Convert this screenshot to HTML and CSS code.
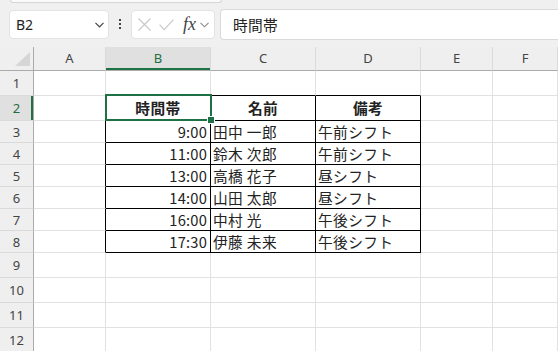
FILE: index.html
```html
<!DOCTYPE html>
<html lang="ja">
<head>
<meta charset="utf-8">
<link rel="stylesheet" href="styles.css">
</head>
<body>
<div class="ribbon-edge"></div>
<div class="formula-row">
  <div class="name-box">
    <span>B2</span>
    <svg width="9" height="6" viewBox="0 0 9 6"><path d="M0.5 0.8L4.5 4.8L8.5 0.8" fill="none" stroke="#444" stroke-width="1.2"/></svg>
  </div>
  <div class="dots"><i></i><i></i><i></i></div>
  <div class="fx-box">
    <svg class="ic-x" width="13" height="13" viewBox="0 0 13 13"><path d="M0.5 0.5L12.5 12.5M12.5 0.5L0.5 12.5" stroke="#c9c9c9" stroke-width="1.2" fill="none"/></svg>
    <svg class="ic-ok" width="15" height="12" viewBox="0 0 15 12"><path d="M0.6 5.6L5.2 10.6L14.4 0.6" stroke="#c9c9c9" stroke-width="1.2" fill="none"/></svg>
    <span class="fx">fx</span>
    <svg class="ic-dd" width="9" height="6" viewBox="0 0 9 6"><path d="M0.5 0.8L4.5 4.8L8.5 0.8" fill="none" stroke="#8a8a8a" stroke-width="1.1"/></svg>
  </div>
  <div class="formula-bar">時間帯</div>
</div>
<div class="sheet">
  <div class="ch corner"><svg width="33" height="23" viewBox="0 0 33 23"><polygon points="15,19 30,5 30,19" fill="#d6d6d6"/></svg></div>
  <div class="ch">A</div>
  <div class="ch ch-sel">B</div>
  <div class="ch">C</div>
  <div class="ch">D</div>
  <div class="ch">E</div>
  <div class="ch">F</div>

  <div class="rh">1</div><div class="c"></div><div class="c tb"></div><div class="c tb"></div><div class="c tb"></div><div class="c"></div><div class="c"></div>

  <div class="rh rh-sel">2</div><div class="c tr"></div>
  <div class="c tb tr hd active">時間帯<div class="sel"><div class="handle"></div></div></div>
  <div class="c tb tr hd">名前</div>
  <div class="c tb tr hd">備考</div>
  <div class="c"></div><div class="c"></div>

  <div class="rh">3</div><div class="c tr"></div><div class="c tb tr num">9:00</div><div class="c tb tr">田中 一郎</div><div class="c tb tr">午前シフト</div><div class="c"></div><div class="c"></div>
  <div class="rh">4</div><div class="c tr"></div><div class="c tb tr num">11:00</div><div class="c tb tr">鈴木 次郎</div><div class="c tb tr">午前シフト</div><div class="c"></div><div class="c"></div>
  <div class="rh">5</div><div class="c tr"></div><div class="c tb tr num">13:00</div><div class="c tb tr">高橋 花子</div><div class="c tb tr">昼シフト</div><div class="c"></div><div class="c"></div>
  <div class="rh">6</div><div class="c tr"></div><div class="c tb tr num">14:00</div><div class="c tb tr">山田 太郎</div><div class="c tb tr">昼シフト</div><div class="c"></div><div class="c"></div>
  <div class="rh">7</div><div class="c tr"></div><div class="c tb tr num">16:00</div><div class="c tb tr">中村 光</div><div class="c tb tr">午後シフト</div><div class="c"></div><div class="c"></div>
  <div class="rh">8</div><div class="c tr"></div><div class="c tb tr num">17:30</div><div class="c tb tr">伊藤 未来</div><div class="c tb tr">午後シフト</div><div class="c"></div><div class="c"></div>

  <div class="rh">9</div><div class="c"></div><div class="c"></div><div class="c"></div><div class="c"></div><div class="c"></div><div class="c"></div>
  <div class="rh">10</div><div class="c"></div><div class="c"></div><div class="c"></div><div class="c"></div><div class="c"></div><div class="c"></div>
  <div class="rh">11</div><div class="c"></div><div class="c"></div><div class="c"></div><div class="c"></div><div class="c"></div><div class="c"></div>
  <div class="rh">12</div><div class="c"></div><div class="c"></div><div class="c"></div><div class="c"></div><div class="c"></div><div class="c"></div>
</div>
</body>
</html>
```

FILE: styles.css
```css
* { box-sizing: border-box; }
html, body { margin: 0; padding: 0; }
body {
  width: 558px;
  height: 351px;
  overflow: hidden;
  background: #f0f0f0;
  font-family: "Noto Sans", "Open Sans", sans-serif;
}

.ribbon-edge {
  height: 3px;
  margin: 0 336px 0 10px;
  background: #fafafa;
  border: 1px solid #d6d6d6;
  border-top: none;
  border-radius: 0 0 5px 5px;
}

.formula-row {
  display: flex;
  align-items: flex-start;
  height: 44px;
  padding: 6px 0 0 9px;
}

.name-box {
  margin-top: 1px;
  width: 100px;
  height: 29px;
  background: #fff;
  border: 1px solid #e3e3e3;
  border-radius: 4px;
  display: flex;
  align-items: center;
  justify-content: space-between;
  padding: 0 4px 0 6px;
  font-size: 14px;
  color: #222;
}

.dots {
  width: 22px;
  height: 30px;
  display: flex;
  flex-direction: column;
  align-items: center;
  justify-content: center;
  gap: 2px;
}
.dots i {
  display: block;
  width: 2px;
  height: 2px;
  background: #444;
}

.fx-box {
  margin-top: 1px;
  width: 84px;
  height: 29px;
  background: #fff;
  border: 1px solid #e3e3e3;
  border-radius: 4px;
  display: flex;
  align-items: center;
  padding-left: 6px;
}
.ic-x { margin-right: 8px; }
.ic-ok { margin-right: 9px; }
.fx {
  font-family: "Liberation Serif", "DejaVu Serif", serif;
  font-style: italic;
  font-size: 18px;
  color: #444;
  line-height: 1;
  margin-top: -2px;
  margin-right: 4px;
}

.formula-bar {
  margin-left: 5px;
  flex: 1;
  height: 31px;
  background: #fff;
  border: 1px solid #dadada;
  border-right: none;
  border-radius: 4px 0 0 4px;
  padding-left: 12px;
  display: flex;
  align-items: center;
  font-family: "Noto Sans CJK JP", sans-serif;
  font-size: 14.7px;
  letter-spacing: 0.3px;
  color: #222;
}

.sheet {
  display: grid;
  grid-template-columns: 34px 72px 105px 105px 105px 72px 1fr;
  grid-template-rows: 24px 25px 25px repeat(6, 22px) repeat(4, 25px);
  background: #fff;
}

.ch {
  background: #efefef;
  border-right: 1px solid #dadada;
  border-bottom: 1px solid #ababab;
  display: flex;
  align-items: center;
  justify-content: center;
  font-size: 13px;
  color: #444;
  padding-bottom: 2px;
}
.ch.corner {
  border-right: 1px solid #ababab;
  padding: 0;
  align-items: flex-end;
  justify-content: flex-start;
}
.ch.corner svg { display: block; }
.ch-sel {
  background: #e0e0e0;
  color: #1e6e42;
  box-shadow: inset 0 -2px 0 #1e7145;
}

.rh {
  background: #efefef;
  border-right: 1px solid #ababab;
  border-bottom: 1px solid #dadada;
  display: flex;
  align-items: center;
  justify-content: center;
  font-size: 13px;
  color: #444;
}
.rh-sel {
  background: #e0e0e0;
  color: #1e6e42;
  box-shadow: inset -2px 0 0 #1e7145;
}

.c {
  position: relative;
  border-right: 1px solid #e1e1e1;
  border-bottom: 1px solid #e1e1e1;
  font-family: "Noto Sans CJK JP", sans-serif;
  font-size: 14.7px;
  letter-spacing: 0.4px;
  color: #222;
  line-height: 20px;
  display: flex;
  align-items: flex-end;
  padding: 0 2px 0 2px;
  white-space: nowrap;
}
.c.tb { border-bottom-color: #000; }
.c.tr { border-right-color: #000; }
.c.hd {
  justify-content: center;
  font-weight: bold;
  padding-bottom: 2px;
}
.c.num {
  justify-content: flex-end;
  padding-right: 3px;
  letter-spacing: 0.2px;
}

.sel {
  position: absolute;
  top: -2px;
  left: -1px;
  right: -2px;
  bottom: -1px;
  border: 2px solid #1e7145;
  z-index: 2;
}
.handle {
  position: absolute;
  right: -4px;
  bottom: -4px;
  width: 6px;
  height: 6px;
  background: #1e7145;
  border: 1px solid #fff;
  box-sizing: content-box;
  margin: -1px;
}
```
